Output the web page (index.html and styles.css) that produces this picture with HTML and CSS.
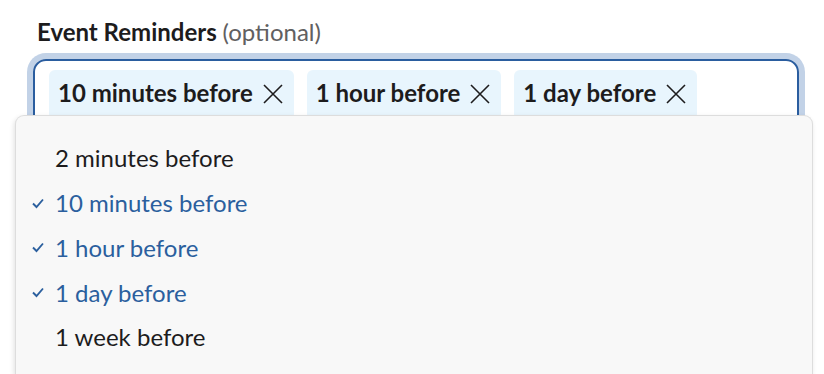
FILE: index.html
```html
<!DOCTYPE html>
<html lang="en">
<head>
    <meta charset="UTF-8">
    <title>Event Reminders</title>
    <link rel="stylesheet" href="styles.css">
</head>
<body>
    <div class="field">
        <!-- label -->
        <div class="field-label">Event Reminders <span class="optional">(optional)</span></div>

        <!-- multi select -->
        <div class="select-box">
            <span class="chip">10 minutes before
                <svg class="chip-x" viewBox="0 0 20 20"><path d="M1 1 L19 19 M19 1 L1 19"/></svg>
            </span>
            <span class="chip">1 hour before
                <svg class="chip-x" viewBox="0 0 20 20"><path d="M1 1 L19 19 M19 1 L1 19"/></svg>
            </span>
            <span class="chip">1 day before
                <svg class="chip-x" viewBox="0 0 20 20"><path d="M1 1 L19 19 M19 1 L1 19"/></svg>
            </span>
        </div>

        <!-- dropdown -->
        <ul class="menu">
            <li class="menu-item">2 minutes before</li>
            <li class="menu-item selected">
                <svg class="check" viewBox="0 0 14 14"><path d="M2 7.5 L5.5 11 L12 3.5"/></svg>10 minutes before
            </li>
            <li class="menu-item selected">
                <svg class="check" viewBox="0 0 14 14"><path d="M2 7.5 L5.5 11 L12 3.5"/></svg>1 hour before
            </li>
            <li class="menu-item selected">
                <svg class="check" viewBox="0 0 14 14"><path d="M2 7.5 L5.5 11 L12 3.5"/></svg>1 day before
            </li>
            <li class="menu-item">1 week before</li>
        </ul>
    </div>
</body>
</html>
```

FILE: styles.css
```css
html, body {
    height: 374px;
}

body {
    margin: 0;
    background: #ffffff;
    font-family: 'Lato', 'Noto Sans', sans-serif;
    color: #1d1c1d;
}

.field {
    position: relative;
    height: 100%;
    padding: 18px 0 0 33px;
    width: 766px;
}

.field-label {
    font-size: 24px;
    font-weight: bold;
    line-height: 28px;
    padding-left: 4px;
    margin-bottom: 13px;
}

.optional {
    font-weight: normal;
    color: #616061;
}

.select-box {
    display: flex;
    gap: 13px;
    height: 80px;
    padding: 9px 14px;
    box-sizing: border-box;
    border: 2px solid #2a5d9f;
    border-radius: 13px;
    box-shadow: 0 0 0 6px #c2d2e7;
}

.chip {
    display: flex;
    align-items: center;
    gap: 10px;
    height: 50px;
    padding: 0 11px 5px 9px;
    box-sizing: border-box;
    background: #e8f5fd;
    border-radius: 6px;
    font-size: 24px;
    font-weight: bold;
}

.chip-x {
    width: 20px;
    height: 20px;
    margin-top: 3px;
    fill: none;
    stroke: #1d1c1d;
    stroke-width: 1.6;
}

.menu {
    position: absolute;
    top: 115px;
    left: 15px;
    width: 798px;
    height: 259px;
    margin: 0;
    padding: 19.5px 0 0 0;
    list-style: none;
    background: #f8f8f8;
    border: 1px solid #dddddd;
    border-bottom: none;
    border-radius: 9px 9px 0 0;
    box-sizing: border-box;
    box-shadow: -1px 2px 5px rgba(0, 0, 0, 0.12);
}

.menu-item {
    display: flex;
    align-items: center;
    height: 44.75px;
    padding-left: 39px;
    font-size: 24px;
    position: relative;
}

.menu-item.selected {
    color: #2b5f9e;
}

.check {
    position: absolute;
    left: 15px;
    width: 14px;
    height: 14px;
    fill: none;
    stroke: #2b5f9e;
    stroke-width: 1.9;
}
```
